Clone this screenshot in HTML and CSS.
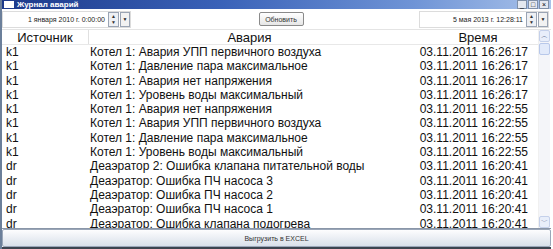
FILE: index.html
```html
<!DOCTYPE HTML>
<html>

<head>
    <meta charset="UTF-8">
    <link rel="stylesheet" href="styles.css">
</head>

<body>
    <div class="window">
        <div class="titlebar">
            <span class="app-icon"></span>
            <span class="title">Журнал аварий</span>
            <div class="win-buttons">
                <span class="wbtn">_</span>
                <span class="wbtn">□</span>
                <span class="wbtn close">×</span>
            </div>
        </div>

        <div class="toolbar">
            <div class="picker left">
                <span class="picker-text">1 января 2010 г. 0:00:00</span>
                <span class="spin"><span>▲</span><span>▼</span></span>
                <span class="drop">▼</span>
            </div>
            <button class="refresh">Обновить</button>
            <div class="picker right">
                <span class="picker-text">5 мая 2013 г. 12:28:11</span>
                <span class="spin"><span>▲</span><span>▼</span></span>
                <span class="drop">▼</span>
            </div>
        </div>

        <div class="grid">
            <div class="table">
                <div class="row head">
                    <div class="c-src">Источник</div>
                    <div class="c-msg">Авария</div>
                    <div class="c-time">Время</div>
                </div>
                <div class="rows">
                    <div class="row"><div class="c-src">k1</div><div class="c-msg">Котел 1: Авария УПП первичного воздуха</div><div class="c-time">03.11.2011 16:26:17</div></div>
                    <div class="row"><div class="c-src">k1</div><div class="c-msg">Котел 1: Давление пара максимальное</div><div class="c-time">03.11.2011 16:26:17</div></div>
                    <div class="row"><div class="c-src">k1</div><div class="c-msg">Котел 1: Авария нет напряжения</div><div class="c-time">03.11.2011 16:26:17</div></div>
                    <div class="row"><div class="c-src">k1</div><div class="c-msg">Котел 1: Уровень воды максимальный</div><div class="c-time">03.11.2011 16:26:17</div></div>
                    <div class="row"><div class="c-src">k1</div><div class="c-msg">Котел 1: Авария нет напряжения</div><div class="c-time">03.11.2011 16:22:55</div></div>
                    <div class="row"><div class="c-src">k1</div><div class="c-msg">Котел 1: Авария УПП первичного воздуха</div><div class="c-time">03.11.2011 16:22:55</div></div>
                    <div class="row"><div class="c-src">k1</div><div class="c-msg">Котел 1: Давление пара максимальное</div><div class="c-time">03.11.2011 16:22:55</div></div>
                    <div class="row"><div class="c-src">k1</div><div class="c-msg">Котел 1: Уровень воды максимальный</div><div class="c-time">03.11.2011 16:22:55</div></div>
                    <div class="row"><div class="c-src">dr</div><div class="c-msg">Деаэратор 2: Ошибка клапана питательной воды</div><div class="c-time">03.11.2011 16:20:41</div></div>
                    <div class="row"><div class="c-src">dr</div><div class="c-msg">Деаэратор: Ошибка ПЧ насоса 3</div><div class="c-time">03.11.2011 16:20:41</div></div>
                    <div class="row"><div class="c-src">dr</div><div class="c-msg">Деаэратор: Ошибка ПЧ насоса 2</div><div class="c-time">03.11.2011 16:20:41</div></div>
                    <div class="row"><div class="c-src">dr</div><div class="c-msg">Деаэратор: Ошибка ПЧ насоса 1</div><div class="c-time">03.11.2011 16:20:41</div></div>
                    <div class="row"><div class="c-src">dr</div><div class="c-msg">Деаэратор: Ошибка клапана подогрева</div><div class="c-time">03.11.2011 16:20:41</div></div>
                </div>
            </div>
            <div class="scrollbar">
                <span class="sb-btn">︿</span>
                <span class="sb-thumb"></span>
                <span class="sb-track"></span>
                <span class="sb-btn">﹀</span>
            </div>
        </div>

        <button class="export">Выгрузить в EXCEL</button>
        <div class="taskbar"></div>
    </div>
</body>

</html>
```

FILE: styles.css
```css
body {
    margin: 0;
    background: #fff;
    font-family: "Liberation Sans", Arial, sans-serif;
}

.window {
    width: 551px;
    height: 249px;
    display: flex;
    flex-direction: column;
    border-left: 2px solid #6b7f9a;
    box-sizing: border-box;
    overflow: hidden;
}

/* title bar */
.titlebar {
    height: 9px;
    flex: none;
    display: flex;
    align-items: center;
    background: linear-gradient(to right, #1d3a8a, #3a62b8 40%, #6f94d6 75%, #a9c2ea);
    color: #fff;
    padding-left: 2px;
}

.app-icon {
    width: 10px;
    height: 7px;
    background: #fff;
    margin-right: 3px;
}

.title {
    font-size: 8px;
    font-weight: bold;
    line-height: 9px;
}

.win-buttons {
    margin-left: auto;
    display: flex;
    gap: 1px;
    margin-right: 2px;
}

.wbtn {
    width: 8px;
    height: 7px;
    background: #e4e8f0;
    border: 1px solid #8090a8;
    color: #000;
    font-size: 7px;
    line-height: 7px;
    text-align: center;
}

/* toolbar */
.toolbar {
    height: 20px;
    flex: none;
    display: flex;
    align-items: center;
    justify-content: space-between;
    padding-right: 2px;
    border-bottom: 1px solid #e4e4e4;
}

.picker {
    height: 15px;
    display: flex;
    align-items: center;
    border: 1px solid #dcdcdc;
    background: #fff;
    font-size: 7px;
    color: #222;
}

.picker.left {
    width: 127px;
}

.picker.right {
    width: 128px;
}

.picker-text {
    flex: 1;
    text-align: right;
    padding-right: 3px;
}

.spin {
    width: 9px;
    height: 13px;
    display: flex;
    flex-direction: column;
    border: 1px solid #9aa4b4;
    background: #eef0f4;
    font-size: 5px;
    line-height: 6px;
    text-align: center;
    color: #333;
}

.drop {
    width: 8px;
    height: 13px;
    margin-left: 1px;
    border: 1px solid #9aa4b4;
    background: #f2f2f2;
    font-size: 5px;
    line-height: 13px;
    text-align: center;
    color: #222;
}

.refresh {
    width: 45px;
    height: 14px;
    padding: 0;
    margin-left: 12px;
    font-family: "Liberation Sans", Arial, sans-serif;
    font-size: 7px;
    color: #333;
    background: linear-gradient(#ffffff, #e6e6e6);
    border: 1px solid #8a8a8a;
    border-radius: 2px;
}

/* grid */
.grid {
    flex: 1;
    display: flex;
    min-height: 0;
    border-bottom: 1px solid #8a96a8;
}

.table {
    flex: 1;
    display: flex;
    flex-direction: column;
    overflow: hidden;
}

.rows {
    overflow: hidden;
}

.row {
    display: flex;
    flex: none;
    height: 14.3px;
    line-height: 14px;
    font-size: 12px;
    color: #111;
    white-space: nowrap;
}

.c-src {
    width: 83px;
    padding-left: 4px;
}

.c-msg {
    flex: 1;
    padding-left: 1px;
}

.c-time {
    width: 120px;
    text-align: right;
    padding-right: 10px;
}

.row.head {
    height: 14px;
    line-height: 15px;
    font-size: 13px;
    border-bottom: 1px solid #e8e8e8;
}

.row.head > div {
    text-align: center;
    padding: 0;
}

.row.head .c-src {
    width: 87px;
    border-right: 1px solid #e0e0e0;
    box-sizing: border-box;
}

.row.head .c-msg {
    padding-left: 0;
}

.row.head .c-time {
    padding-left: 8px;
}

.scrollbar {
    width: 11px;
    margin-right: 1px;
    display: flex;
    flex-direction: column;
    background: #f4f5f9;
    border-left: 1px solid #f0f0f0;
}

.sb-btn {
    height: 10px;
    flex: none;
    font-size: 7px;
    line-height: 10px;
    text-align: center;
    color: #5a6a90;
    background: #e8eefa;
    border: 1px solid #c4d0ea;
    border-radius: 2px;
}

.sb-thumb {
    height: 10px;
    flex: none;
    margin-top: 1px;
    background: #e2eafa;
    border: 1px solid #b8c8ea;
    border-radius: 2px;
}

.sb-track {
    flex: 1;
}

/* bottom */
.export {
    height: 18px;
    flex: none;
    width: 100%;
    padding: 0;
    font-family: "Liberation Sans", Arial, sans-serif;
    font-size: 7px;
    color: #333;
    background: linear-gradient(#fdfdfe, #e9edf3 55%, #d9e0ea);
    border: 1px solid #9aa6b8;
    border-radius: 2px;
}

.taskbar {
    height: 2px;
    flex: none;
    background: #3c4450;
}
```
